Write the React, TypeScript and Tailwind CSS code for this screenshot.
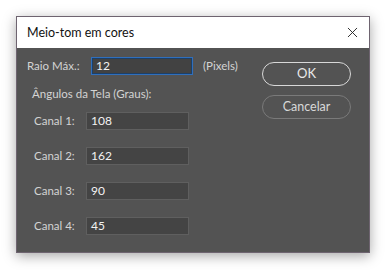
import { X } from "lucide-react"

const canais = [
  { label: "Canal 1:", value: "108" },
  { label: "Canal 2:", value: "162" },
  { label: "Canal 3:", value: "90" },
  { label: "Canal 4:", value: "45" },
]

export default function App() {
  return (
    <div className="w-[387px] h-[270px] bg-white pl-[16px] pt-[16px] font-['Lato',sans-serif]">
      <div className="w-[354px] h-[237px] flex flex-col border border-[#6e6470] shadow-[0_3px_12px_rgba(0,0,0,0.35)]">
        {/* title bar */}
        <div className="h-[31px] bg-white flex items-center justify-between pl-[10px] pr-[8px]">
          <span className="text-[12.5px] text-[#111] pt-[1px]">Meio-tom em cores</span>
          <X size={17} strokeWidth={1.3} className="text-[#222]" />
        </div>

        {/* body */}
        <div className="flex-1 bg-[#535353] flex text-[11.5px] text-[#d4d4d4]">
          <div className="flex-1 pl-[10px] pt-[9px]">
            <div className="flex items-center h-[18px]">
              <span className="w-[64px]">Raio Máx.:</span>
              <div className="w-[102px] h-[18px] border border-[#2f6fbd] bg-[#424242] flex items-center pl-[4px] text-[12px] text-[#f2f2f2] shadow-[inset_0_0_0_1px_#1d3f66]">
                12
              </div>
              <span className="ml-[10px]">(Pixels)</span>
            </div>

            <div className="mt-[11px] pl-[5px] leading-[16px]">Ângulos da Tela (Graus):</div>

            <div className="mt-[10px] pl-[7px] flex flex-col gap-[17px]">
              {canais.map((c) => (
                <div key={c.label} className="flex items-center h-[18px]">
                  <span className="w-[52px]">{c.label}</span>
                  <div className="w-[103px] h-[18px] border border-[#5f5f5f] bg-[#444444] flex items-center pl-[4px] text-[12px] text-[#f2f2f2]">
                    {c.value}
                  </div>
                </div>
              ))}
            </div>
          </div>

          <div className="w-[107px] pt-[14px] flex flex-col gap-[9px]">
            <button className="w-[89px] h-[24px] rounded-full border-[1.5px] border-[#d8d8d8] text-[13px] text-[#e8e8e8]">
              OK
            </button>
            <button className="w-[89px] h-[24px] rounded-full border border-[#7a7a7a] text-[12.5px] text-[#d8d8d8]">
              Cancelar
            </button>
          </div>
        </div>
      </div>
    </div>
  )
}
